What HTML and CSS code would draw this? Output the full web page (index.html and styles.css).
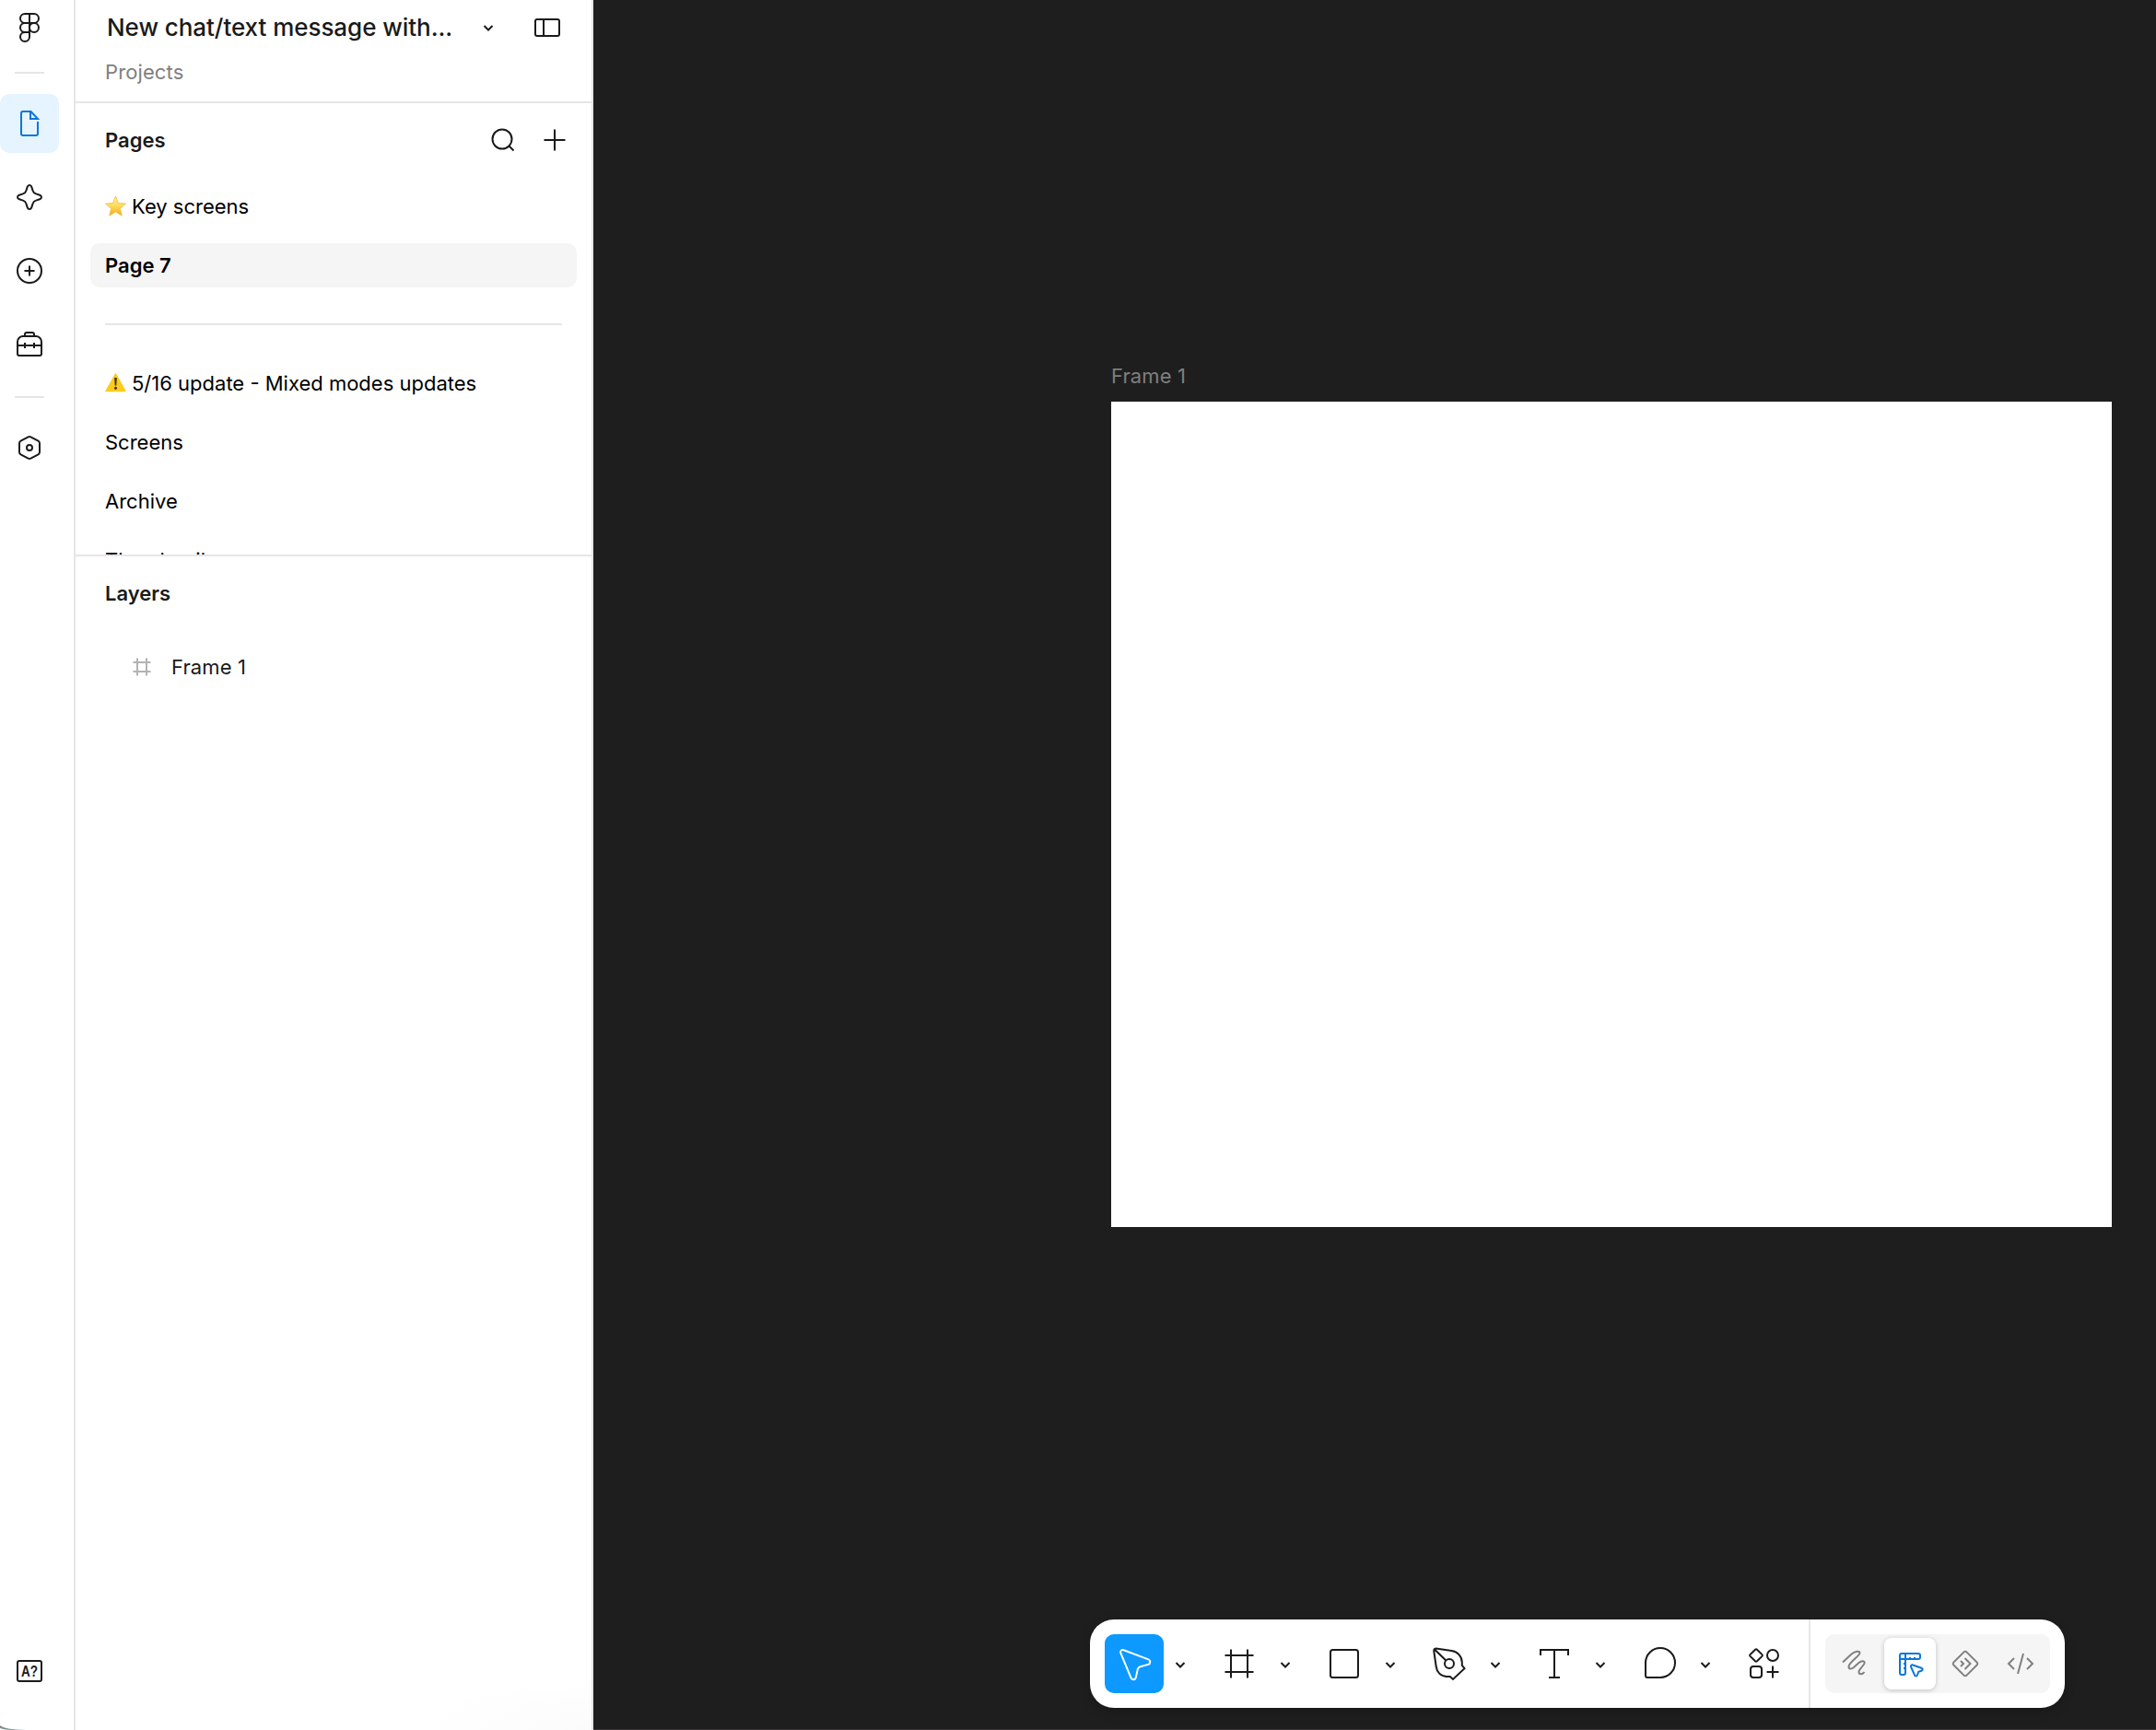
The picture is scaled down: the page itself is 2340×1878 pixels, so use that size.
FILE: index.html
```html
<!DOCTYPE html>
<html lang="en">
<head>
    <meta charset="UTF-8">
    <meta name="viewport" content="width=device-width, initial-scale=1.0">
    <title>Design Editor</title>
    <link rel="stylesheet" href="styles.css">
</head>
<body>
    <div class="app">
        <nav class="rail">
            <button class="rail-btn logo">
                <svg width="24" height="34" viewBox="0 0 24 34"><path d="M12 2H7a5 5 0 0 0 0 10h5zM12 2h5a5 5 0 0 1 0 10h-5zM12 12H7a5 5 0 0 0 0 10h5zM12 22v5a5 5 0 1 1-5-5z"/><circle cx="17" cy="17" r="5"/></svg>
            </button>
            <div class="rail-line"></div>
            <button class="rail-btn active">
                <svg width="48" height="48" viewBox="0 0 48 48"><path d="M33 22v13a2 2 0 0 1-2 2H17a2 2 0 0 1-2-2V13a2 2 0 0 1 2-2h8.500l7.500 8h-8v-8"/></svg>
            </button>
            <button class="rail-btn">
                <svg width="48" height="48" viewBox="0 0 48 48"><path d="M21.700 12.900c.8-2.500 3.800-2.500 4.600 0l1.300 4.100a5 5 0 0 0 3.400 3.400l4.100 1.300c2.500.8 2.500 3.800 0 4.600L31 27.600a5 5 0 0 0-3.400 3.400l-1.300 4.100c-.8 2.500-3.800 2.500-4.600 0L20.400 31a5 5 0 0 0-3.400-3.400l-4.100-1.300c-2.500-.8-2.500-3.800 0-4.600l4.100-1.300a5 5 0 0 0 3.400-3.400z"/></svg>
            </button>
            <button class="rail-btn">
                <svg width="48" height="48" viewBox="0 0 48 48"><circle cx="24" cy="24" r="13"/><path d="M24 18.500v11M18.500 24h11"/></svg>
            </button>
            <button class="rail-btn">
                <svg width="48" height="48" viewBox="0 0 48 48"><path d="M11 21a6 6 0 0 1 6-6h14a6 6 0 0 1 6 6v13a2 2 0 0 1-2 2H13a2 2 0 0 1-2-2zM19 15v-2a2 2 0 0 1 2-2h6a2 2 0 0 1 2 2v2M11 25h26M19 22v6M29 22v6"/></svg>
            </button>
            <div class="rail-line second"></div>
            <button class="rail-btn">
                <svg width="48" height="48" viewBox="0 0 48 48"><path d="M22.600 12.400a3 3 0 0 1 2.800 0l8.100 4.300a2.800 2.800 0 0 1 1.500 2.500v9.600a2.800 2.800 0 0 1-1.500 2.500l-8.100 4.300a3 3 0 0 1-2.800 0l-8.100-4.300a2.800 2.800 0 0 1-1.500-2.500v-9.600a2.800 2.800 0 0 1 1.500-2.500z"/><circle cx="24" cy="24" r="3"/></svg>
            </button>
            <button class="rail-btn keyboard">
                <svg width="48" height="48" viewBox="0 0 48 48"><rect x="11" y="13" width="26" height="22" rx="2"/><text class="key-text" x="15" y="30" textLength="18" lengthAdjust="spacingAndGlyphs">A?</text></svg>
            </button>
            <svg class="corner" width="28" height="5" viewBox="0 0 28 5"><path d="M0 0C4 3 11 4.700 28 5H14C8 5 3 4 0 3z"/></svg>
        </nav>

        <aside class="panel">
            <header class="file-header">
                <div class="file-row">
                    <h1>New chat/text message with...</h1>
                    <svg class="file-chevron" width="16" height="16" viewBox="0 0 16 16"><path d="M3.500 6 8 10.500 12.500 6"/></svg>
                    <svg class="panel-toggle" width="32" height="32" viewBox="0 0 32 32"><rect x="3" y="7" width="26" height="18" rx="2"/><path d="M12 7v18"/></svg>
                </div>
                <div class="project">Projects</div>
            </header>

            <section class="pages">
                <div class="section-head">
                    <h2>Pages</h2>
                    <svg width="32" height="32" viewBox="0 0 32 32"><circle cx="15" cy="15" r="10.500"/><path d="m22.500 22.500 5 5"/></svg>
                    <svg width="32" height="32" viewBox="0 0 32 32"><path d="M16 4.500v23M4.500 16h23"/></svg>
                </div>
                <ul class="page-list">
                    <li>
                        <svg class="emoji" width="24" height="24" viewBox="0 0 24 24">
                            <defs><linearGradient id="star" x1="0" y1="0" x2="0" y2="1"><stop offset="0" stop-color="#ffe9a0"/><stop offset=".45" stop-color="#ffe05c"/><stop offset="1" stop-color="#f4a91c"/></linearGradient></defs>
                            <path class="star" fill="url(#star)" d="m11.500 1 3 7.500 8 .6-6.100 5.300 1.900 7.800-6.800-4.200-6.800 4.200 1.900-7.800L.5 9.100l8-.6z"/>
                        </svg>
                        Key screens
                    </li>
                    <li class="selected">Page 7</li>
                    <li class="divider"></li>
                    <li>
                        <svg class="emoji" width="24" height="24" viewBox="0 0 24 24">
                            <path class="warn" d="M11.500 2 22 20.500H1z"/>
                            <path class="warn-mark" d="M10.200 6h2.600l-.5 8.500h-1.600z"/><circle class="warn-mark" cx="11.500" cy="17.300" r="1.500"/>
                        </svg>
                        5/16 update - Mixed modes updates
                    </li>
                    <li>Screens</li>
                    <li>Archive</li>
                    <li>Thumbnail</li>
                </ul>
            </section>

            <section class="layers">
                <div class="section-head"><h2>Layers</h2></div>
                <div class="layer">
                    <svg width="20" height="20" viewBox="0 0 20 20"><path d="M5 .5v19M15 .5v19M.5 5h19M.5 15h19"/></svg>
                    <span>Frame 1</span>
                </div>
            </section>
        </aside>

        <main class="canvas">
            <div class="frame">
                <div class="frame-name">Frame 1</div>
                <div class="frame-body"></div>
            </div>

            <div class="toolbar">
                <div class="tools">
                    <button class="tool active"><svg width="48" height="48" viewBox="0 0 48 48"><path d="M9.300 12.400c-.8-2.200 1.200-4.100 3.300-3.200l26.800 10.200c2.700 1.100 2.500 4.700-.2 5.500l-8.600 2.300a4 4 0 0 0-2.800 2.800l-2 9.100c-.8 2.700-4.300 2.900-5.300.3z"/></svg></button>
                    <svg class="caret" width="32" height="64" viewBox="0 0 32 64"><path d="m11.500 31 4.500 4.500 4.500-4.500"/></svg>
                    <button class="tool"><svg width="48" height="48" viewBox="0 0 48 48"><path d="M15 8.500v31M33 8.500v31M8.500 15h31M8.500 33h31"/></svg></button>
                    <svg class="caret" width="32" height="64" viewBox="0 0 32 64"><path d="m11.500 31 4.500 4.500 4.500-4.500"/></svg>
                    <button class="tool"><svg width="48" height="48" viewBox="0 0 48 48"><rect x="9" y="9" width="30" height="30" rx="2.500"/></svg></button>
                    <svg class="caret" width="32" height="64" viewBox="0 0 32 64"><path d="m11.500 31 4.500 4.500 4.500-4.500"/></svg>
                    <button class="tool"><svg width="48" height="48" viewBox="0 0 48 48"><path d="M9.500 7.500 26.500 10c6.500 1 11 6 11.300 12.500v3.500l2.700 3.200L28 41l-3.200-3h-4C14.500 37.500 10.500 33 9.700 27L7.300 10.500c-.2-1.800.6-2.800 2.200-3zM8.500 9l11.800 11.500"/><circle cx="24" cy="24" r="5"/></svg></button>
                    <svg class="caret" width="32" height="64" viewBox="0 0 32 64"><path d="m11.500 31 4.500 4.500 4.500-4.500"/></svg>
                    <button class="tool"><svg width="48" height="48" viewBox="0 0 48 48"><path d="M9 15V9h30v6M24 9v30M18 39h12"/></svg></button>
                    <svg class="caret" width="32" height="64" viewBox="0 0 32 64"><path d="m11.500 31 4.500 4.500 4.500-4.500"/></svg>
                    <button class="tool"><svg width="48" height="48" viewBox="0 0 48 48"><path d="M11 39a2 2 0 0 1-2-2V23a16 16 0 1 1 16 16z"/></svg></button>
                    <svg class="caret" width="32" height="64" viewBox="0 0 32 64"><path d="m11.500 31 4.500 4.500 4.500-4.500"/></svg>
                    <button class="tool"><svg width="48" height="48" viewBox="0 0 48 48"><path d="M14 8.700q1-.8 2 0l5.500 5.400q.8.900 0 1.800L16 21.300q-1 .8-2 0l-5.500-5.400q-.8-.9 0-1.800zM33 26.500v13M26.500 33h13"/><circle cx="33" cy="15" r="6"/><rect x="9" y="27" width="12" height="12" rx="3"/></svg></button>
                </div>
                <div class="modes">
                    <div class="segmented">
                        <button class="mode"><svg width="48" height="48" viewBox="0 0 48 48"><path d="M11 22.500 20 14c4-3.500 9.500-4.500 9.500-1.500 0 3-10.500 9-11.800 14-.8 3.500 2.300 4 5.300 1.500l5.500-5c3-2.700 7-2.300 6 .8-.8 2.500-6 6-6 9.200 0 3 4 3 6 0"/></svg></button>
                        <button class="mode active"><svg width="48" height="48" viewBox="0 0 48 48"><path d="M15 13h18a2 2 0 0 1 2 2v2a2 2 0 0 1-2 2H19v15a2 2 0 0 1-2 2h-2a2 2 0 0 1-2-2V15a2 2 0 0 1 2-2zM19 13v6M13 19h6M24 17v2M29 17v2M17 24h2M17 29h2M25 27.500c-.4-1.600.8-2.500 2.200-2l9.300 3.300c1.600.6 1.500 2.400-.1 2.900l-3.200 1-1.200 3.500c-.6 1.800-2.500 1.800-3.100 0z"/></svg></button>
                        <button class="mode"><svg width="48" height="48" viewBox="0 0 48 48"><path d="M22.500 11.400a2 2 0 0 1 3 0l11.100 11.100a2 2 0 0 1 0 3L25.500 36.600a2 2 0 0 1-3 0L11.400 25.500a2 2 0 0 1 0-3zM19 21l3 3-3 3M23.500 18l6 6-6 6"/></svg></button>
                        <button class="mode"><svg width="48" height="48" viewBox="0 0 48 48"><path d="m17 18-6 6 6 6M31 18l6 6-6 6M27 13l-6 22"/></svg></button>
                    </div>
                </div>
            </div>
        </main>
    </div>
</body>
</html>
```
FILE: styles.css
```css
* {
    box-sizing: border-box;
}
body {
    margin: 0;
    font-family: Inter, sans-serif;
    font-size: 22px;
    letter-spacing: 0.11px;
    color: #1a1a1a;
    background-color: #fff;
}
h1, h2, ul {
    margin: 0;
    padding: 0;
}
button {
    border: none;
    padding: 0;
    background: none;
    color: inherit;
    display: flex;
    align-items: center;
    justify-content: center;
}
svg {
    flex: none;
    fill: none;
    stroke: currentColor;
    stroke-width: 2;
}
.app {
    display: flex;
    width: 2340px;
    height: 1878px;
    overflow: hidden;
}

/* left rail */
.rail {
    position: relative;
    flex: none;
    width: 82px;
    border-right: 2px solid #e6e6e6;
    display: flex;
    flex-direction: column;
    gap: 16px;
}
.rail-btn {
    width: 64px;
    height: 64px;
    border-radius: 10px;
}
.rail-btn.logo {
    height: 60px;
    margin-bottom: 2px;
}
.rail-btn.active {
    margin-top: 6px;
    background-color: #e5f4ff;
    color: #0b76db;
}
.rail-line {
    width: 32px;
    height: 2px;
    margin-left: 16px;
    background-color: #e6e6e6;
}
.rail-line.second {
    margin-top: 8px;
    margin-bottom: 6px;
}
.keyboard {
    margin-top: auto;
    margin-bottom: 32px;
}
.key-text {
    font-size: 16px;
    font-weight: 600;
    letter-spacing: 0;
    fill: currentColor;
    stroke: none;
}
.corner {
    position: absolute;
    left: 0;
    bottom: 0;
    fill: #7a8f8b;
    stroke: none;
}

/* file panel */
.panel {
    flex: none;
    width: 562px;
    border-right: 2px solid #e6e6e6;
    display: flex;
    flex-direction: column;
    background: radial-gradient(ellipse 200px 60px at 100% 100%, #fbfbfb, #fff);
}
.file-header {
    height: 112px;
    padding: 14px 32px 0 34px;
    border-bottom: 2px solid #e6e6e6;
}
.file-row {
    display: flex;
    align-items: center;
    height: 32px;
}
h1 {
    padding-bottom: 2px;
    font-size: 26px;
    font-weight: 550;
    letter-spacing: -0.05px;
    white-space: nowrap;
}
.file-chevron {
    margin-left: auto;
}
.panel-toggle {
    margin-left: 40px;
}
.project {
    margin-top: 16px;
    margin-left: -2px;
    line-height: 32px;
    color: #808080;
}
.section-head {
    display: flex;
    align-items: center;
    gap: 24px;
    height: 80px;
    padding: 0 24px 0 32px;
}
h2 {
    flex: 1;
    font-size: 22px;
    font-weight: 600;
    letter-spacing: 0;
}
.pages {
    height: 492px;
    overflow: hidden;
    border-bottom: 2px solid #e6e6e6;
}
.page-list {
    list-style: none;
    display: flex;
    flex-direction: column;
    gap: 16px;
    padding: 8px 16px 0;
    letter-spacing: 0;
    color: #000;
}
.page-list li {
    display: flex;
    align-items: center;
    gap: 5px;
    height: 48px;
    flex: none;
    padding: 0 16px;
    border-radius: 10px;
}
.page-list .selected {
    background-color: #f5f5f5;
    font-weight: 600;
}
.page-list .divider::before {
    content: "";
    flex: 1;
    height: 2px;
    background-color: #e6e6e6;
}
.emoji {
    stroke: none;
}
.star {
    stroke: #eebc4a;
    stroke-width: 0.8;
    stroke-linejoin: round;
}
.warn {
    fill: #fdcb1e;
    stroke: #fdcb1e;
    stroke-width: 1.5;
    stroke-linejoin: round;
}
.warn-mark {
    fill: #3b2e08;
}
.layer {
    display: flex;
    align-items: center;
    gap: 22px;
    height: 48px;
    margin-top: 16px;
    padding-left: 62px;
}
.layer svg {
    color: #b3b3b3;
}

/* canvas */
.canvas {
    position: relative;
    flex: 1;
    background-color: #1e1e1e;
    border-bottom: 1px solid #3a3739;
}
.frame {
    position: absolute;
    left: 562px;
    top: 392px;
}
.frame-name {
    height: 44px;
    line-height: 32px;
    color: #7f7f7f;
}
.frame-body {
    width: 1086px;
    height: 896px;
    background-color: #fff;
}
.toolbar {
    position: absolute;
    left: 539px;
    bottom: 23px;
    display: flex;
    height: 96px;
    border-radius: 26px;
    background-color: #fff;
    box-shadow: 0 4px 12px rgba(0, 0, 0, 0.2);
}
.tools {
    display: flex;
    padding: 16px;
}
.tool {
    width: 64px;
    height: 64px;
    border-radius: 10px;
}
.tool.active {
    background-color: #0d99ff;
    color: #fff;
}
.caret {
    margin: 0 16px 0 2px;
}
.modes {
    padding: 16px;
    border-left: 2px solid #e6e6e6;
}
.segmented {
    display: flex;
    gap: 4px;
    height: 64px;
    padding: 4px;
    border-radius: 10px;
    background-color: #f5f5f5;
    color: #808080;
}
.mode {
    width: 56px;
    height: 56px;
    border-radius: 8px;
}
.mode.active {
    background-color: #fff;
    color: #0b76db;
    box-shadow: 0 1px 5px rgba(0, 0, 0, 0.22);
}
```
